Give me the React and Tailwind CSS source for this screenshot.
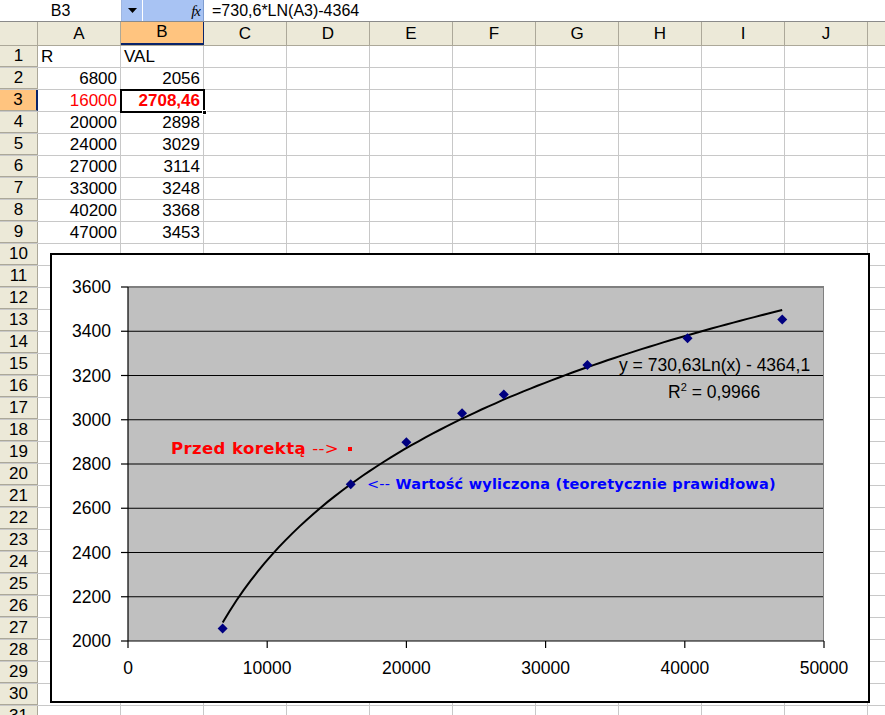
import React from 'react'

const COLS = ['A', 'B', 'C', 'D', 'E', 'F', 'G', 'H', 'I', 'J', 'K']

// sheet data: [A, B]
const DATA = [
  ['R', 'VAL'],
  [6800, 2056],
  [16000, '2708,46'],
  [20000, 2898],
  [24000, 3029],
  [27000, 3114],
  [33000, 3248],
  [40200, 3368],
  [47000, 3453],
]

const POINTS = [
  [6800, 2056],
  [16000, 2708.46],
  [20000, 2898],
  [24000, 3029],
  [27000, 3114],
  [33000, 3248],
  [40200, 3368],
  [47000, 3453],
]

// plot area in page coordinates
const PX0 = 128
const PX1 = 824
const PY0 = 287
const PY1 = 641
const px = (x) => PX0 + (x / 50000) * (PX1 - PX0)
const py = (y) => PY1 - ((y - 2000) / 1600) * (PY1 - PY0)

function trendPath() {
  let d = ''
  for (let i = 0; i <= 80; i++) {
    const x = 6800 + ((47000 - 6800) * i) / 80
    const y = 730.63 * Math.log(x) - 4364.1
    d += (i === 0 ? 'M' : 'L') + px(x).toFixed(1) + ' ' + py(y).toFixed(1) + ' '
  }
  return d
}

function Chart() {
  const yTicks = [2000, 2200, 2400, 2600, 2800, 3000, 3200, 3400, 3600]
  const xTicks = [0, 10000, 20000, 30000, 40000, 50000]
  return (
    <div className="absolute left-[50px] top-[253px] w-[820px] h-[450px] bg-white border-2 border-black">
      <svg width="816" height="446" viewBox="52 255 816 446" className="block" style={{ fontFamily: '"Liberation Sans", Arial, sans-serif' }}>
        <rect x={PX0} y={PY0} width={PX1 - PX0} height={PY1 - PY0} fill="#c0c0c0" />
        {yTicks.slice(1).map((t) => (
          <line key={t} x1={PX0} x2={PX1} y1={py(t)} y2={py(t)} stroke="#000" strokeWidth="1.2" />
        ))}
        <line x1={PX0} x2={PX1} y1={PY0 + 0.5} y2={PY0 + 0.5} stroke="#808080" />
        <line x1={PX1 - 0.5} x2={PX1 - 0.5} y1={PY0} y2={PY1} stroke="#808080" />
        <line x1={PX0} x2={PX0} y1={PY0} y2={PY1} stroke="#000" strokeWidth="1.2" />
        <line x1={PX0} x2={PX1} y1={PY1} y2={PY1} stroke="#000" strokeWidth="1.2" />
        {yTicks.map((t) => (
          <g key={t}>
            <line x1={PX0 - 7} x2={PX0} y1={py(t)} y2={py(t)} stroke="#000" strokeWidth="1.2" />
            <text x="111" y={py(t) + 6} textAnchor="end" fontSize="17.5" fill="#000">{t}</text>
          </g>
        ))}
        {xTicks.map((t) => (
          <g key={t}>
            <line x1={px(t)} x2={px(t)} y1={PY1} y2={PY1 + 7} stroke="#000" strokeWidth="1.2" />
            <text x={px(t)} y="674" textAnchor="middle" fontSize="17.5" fill="#000">{t}</text>
          </g>
        ))}
        <path d={trendPath()} fill="none" stroke="#000" strokeWidth="2" />
        {POINTS.map(([x, y]) => {
          const cx = px(x)
          const cy = py(y)
          return (
            <polygon key={x} points={`${cx},${cy - 5} ${cx + 5},${cy} ${cx},${cy + 5} ${cx - 5},${cy}`} fill="#000080" />
          )
        })}
        <text x="619" y="371" fontSize="17.5" fill="#000">y = 730,63Ln(x) - 4364,1</text>
        <text x="668" y="398" fontSize="17.5" fill="#000">
          R<tspan fontSize="11" dy="-7">2</tspan><tspan dy="7"> = 0,9966</tspan>
        </text>
        <g style={{ fontFamily: '"DejaVu Sans", Verdana, sans-serif' }}>
          <text x="171" y="454" fontSize="16.5" fill="#ff0000" fontWeight="bold" letterSpacing="0.4">
            Przed korektą <tspan fontWeight="normal">--&gt;</tspan>
          </text>
          <rect x="348" y="447" width="4" height="4" fill="#ff0000" />
          <text x="367" y="489" fontSize="14.5" fill="#0000ff" fontWeight="bold" letterSpacing="0.2">
            <tspan fontWeight="normal">&lt;--</tspan> Wartość wyliczona (teoretycznie prawidłowa)
          </text>
        </g>
      </svg>
    </div>
  )
}

function Cell({ children, className = '' }) {
  return (
    <div className={`w-[83px] shrink-0 h-full border-r border-[#c8c8c8] flex items-end px-[3px] overflow-hidden whitespace-nowrap ${className}`}>
      {children}
    </div>
  )
}

export default function App() {
  const rows = Array.from({ length: 31 }, (_, i) => i + 1)
  return (
    <div className="w-[885px] h-[715px] overflow-hidden bg-white relative text-[17px] leading-[20px] text-black" style={{ fontFamily: '"Liberation Sans", Arial, sans-serif' }}>
      {/* formula bar */}
      <div className="h-[22px] flex border-b border-[#8a8a8a] bg-white">
        <div className="w-[122px] flex items-center justify-center text-[16px] border-r border-[#9fb6e0]">B3</div>
        <div className="w-[21px] bg-[#a8c3f3] flex items-center justify-center border-r border-white">
          <svg width="9" height="5" viewBox="0 0 9 5"><path d="M0 0h9L4.5 5z" fill="#000" /></svg>
        </div>
        <div className="w-[61px] bg-[#a8c3f3] flex items-center justify-end pr-[3px] border-r border-[#7f9ccf]">
          <span className="italic text-[15px] font-['Liberation_Serif',serif] tracking-[-1px]">fx</span>
        </div>
        <div className="flex-1 flex items-center pl-[8px] text-[16px]">=730,6*LN(A3)-4364</div>
      </div>

      {/* column headers */}
      <div className="h-[24px] flex bg-[#ece9d8] border-b border-[#aca899]">
        <div className="w-[38px] shrink-0 border-r border-[#aca899]" />
        {COLS.map((c) => (
          <div
            key={c}
            className={`w-[83px] shrink-0 flex items-end justify-center pb-[1px] border-r ${c === 'B' ? 'bg-[#ffc47f] border-[#0a246a] border-b-2 border-b-[#0a246a]' : 'border-[#aca899]'}`}
          >
            {c}
          </div>
        ))}
      </div>

      {/* rows */}
      {rows.map((r) => {
        const d = DATA[r - 1]
        const sel = r === 3
        return (
          <div key={r} className="h-[22px] flex border-b border-[#c8c8c8]">
            <div
              className={`w-[38px] shrink-0 flex items-end justify-center border-r ${sel ? 'bg-[#ffc47f] border-r-2 border-[#0a246a]' : 'bg-[#ece9d8] border-[#aca899]'} border-b border-b-[#aca899]`}
            >
              {r}
            </div>
            <Cell className={`${d && typeof d[0] === 'number' ? 'justify-end' : ''} ${sel ? 'text-[#ff0000]' : ''}`}>{d ? d[0] : ''}</Cell>
            <Cell className={`${d && r > 1 ? 'justify-end' : ''} ${sel ? 'text-[#ff0000] font-bold' : ''}`}>{d ? d[1] : ''}</Cell>
            {COLS.slice(2).map((c) => (
              <Cell key={c} />
            ))}
          </div>
        )
      })}

      {/* selected cell outline */}
      <div className="absolute left-[120px] top-[89px] w-[85px] h-[24px] border-2 border-black pointer-events-none" />
      <div className="absolute left-[202px] top-[110px] w-[5px] h-[5px] bg-black border border-white" />

      <Chart />
    </div>
  )
}
